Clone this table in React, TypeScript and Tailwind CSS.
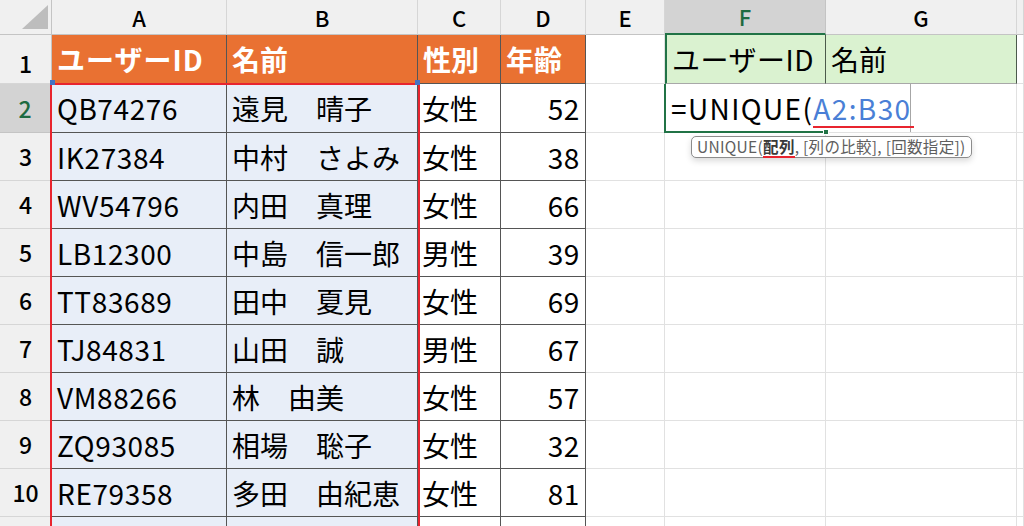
import React from 'react';

const rows = [
  { id: 'QB74276', name: '遠見　晴子', sex: '女性', age: 52 },
  { id: 'IK27384', name: '中村　さよみ', sex: '女性', age: 38 },
  { id: 'WV54796', name: '内田　真理', sex: '女性', age: 66 },
  { id: 'LB12300', name: '中島　信一郎', sex: '男性', age: 39 },
  { id: 'TT83689', name: '田中　夏見', sex: '女性', age: 69 },
  { id: 'TJ84831', name: '山田　誠', sex: '男性', age: 67 },
  { id: 'VM88266', name: '林　由美', sex: '女性', age: 57 },
  { id: 'ZQ93085', name: '相場　聡子', sex: '女性', age: 32 },
  { id: 'RE79358', name: '多田　由紀恵', sex: '女性', age: 81 },
  { id: '', name: '', sex: '', age: null as number | null },
];

const letters = ['A', 'B', 'C', 'D', 'E', 'F', 'G', ''];

const hdr = 'flex items-center justify-center bg-[#f0f0f0] border-r border-b border-r-[#d6d6d6] border-b-[#c4c4c4] text-[22px] font-medium text-black';
const rowHdr = 'flex items-center justify-center bg-[#f0f0f0] border-r border-b border-r-[#c4c4c4] border-b-[#d6d6d6] text-[23px] font-medium text-black';
const dark = 'flex items-center whitespace-nowrap overflow-hidden border-r border-b border-[#555555] text-[28px] leading-none';
const light = 'border-r border-b border-[#e1e1e1] bg-white';

export default function App() {
  return (
    <div className="relative h-[526px] w-[1024px] overflow-hidden bg-white font-['Noto_Sans_CJK_JP',sans-serif] text-black">
      <div className="grid grid-cols-[52px_175px_191px_83px_85px_79px_161px_191px_1fr] grid-rows-[35px_49px_49px_repeat(9,48px)]">
        {/* column headers */}
        <div className="relative bg-[#f0f0f0] border-r border-b border-r-[#c4c4c4] border-b-[#c4c4c4]">
          <svg className="absolute left-[22px] top-[5px]" width="26" height="24" viewBox="0 0 26 24">
            <polygon points="26,0 26,24 0,24" fill="#bdbdbd" />
          </svg>
        </div>
        {letters.map((l) =>
          l === 'F' ? (
            <div key={l} className="flex items-center justify-center bg-[#d3d3d3] border-r border-r-[#c4c4c4] border-b-2 border-b-[#217346] text-[22px] font-medium text-[#1e6b41]">
              F
            </div>
          ) : (
            <div key={l || 'h'} className={hdr}>{l}</div>
          )
        )}

        {/* row 1 */}
        <div className={`${rowHdr} pt-[9px]`}>1</div>
        <div className={`${dark} bg-[#e97132] pl-[5px] font-bold tracking-[1px] text-white`}>ユーザーID</div>
        <div className={`${dark} bg-[#e97132] pl-[5px] font-bold text-white`}>名前</div>
        <div className={`${dark} bg-[#e97132] pl-[5px] font-bold text-white`}>性別</div>
        <div className={`${dark} bg-[#e97132] pl-[5px] font-bold text-white`}>年齢</div>
        <div className={light}></div>
        <div className="flex items-center pl-[5px] text-[28px] leading-none tracking-[0.5px] bg-[#daf2d0] border-r border-r-[#4b5a4b] border-b border-b-[#a8a8a8] border-l-2 border-l-[#217346]">ユーザーID</div>
        <div className="flex items-center pl-[5px] text-[28px] leading-none bg-[#daf2d0] border-r border-r-[#4b5a4b] border-b border-b-[#a8a8a8]">名前</div>
        <div className={light}></div>

        {/* data rows */}
        {rows.map((r, i) => (
          <React.Fragment key={i}>
            {i === 0 ? (
              <div className="flex items-center justify-center bg-[#d3d3d3] border-b border-b-[#c4c4c4] border-r-2 border-r-[#217346] text-[23px] font-medium text-[#1e6b41]">2</div>
            ) : (
              <div className={rowHdr}>{i < 9 ? i + 2 : ''}</div>
            )}
            <div className={`${dark} bg-[#e8eef8] pl-[5px] tracking-[0.6px]`}>{r.id}</div>
            <div className={`${dark} bg-[#e8eef8] pl-[5px]`}>{r.name}</div>
            <div className={`${dark} bg-white pl-[4px]`}>{r.sex}</div>
            <div className={`${dark} bg-white justify-end pr-[5px] tracking-[0.6px]`}>{r.age}</div>
            <div className={light}></div>
            <div className={light}></div>
            <div className={light}></div>
            <div className={light}></div>
          </React.Fragment>
        ))}
      </div>

      {/* reference range highlight */}
      <div className="absolute left-[50px] top-[83px] h-[460px] w-[370px] border-2 border-[#e8242f]"></div>
      <div className="absolute left-[50px] top-[80px] h-[5px] w-[5px] bg-[#4472c4]"></div>
      <div className="absolute left-[415px] top-[80px] h-[5px] w-[5px] bg-[#4472c4]"></div>

      {/* in-cell editor */}
      <div className="absolute left-[664px] top-[84px] flex h-[48px] w-[247px] items-center whitespace-nowrap border-l-2 border-r border-l-[#217346] border-r-[#a6a6a6] bg-white pl-[5px] text-[28px] leading-none tracking-[1.4px]">
        <span>=UNIQUE(</span>
        <span className="relative text-[#4a7fd6]">
          A2:B30
          <span className="absolute -bottom-[6px] left-0 right-[-2px] h-[2px] bg-[#e8242f]"></span>
        </span>
      </div>
      <div className="absolute left-[664px] top-[131px] h-[2px] w-[162px] bg-[#217346]"></div>
      <div className="absolute left-[823px] top-[129px] h-[6px] w-[6px] border border-white bg-[#217346]"></div>

      {/* tooltip */}
      <div className="absolute left-[691px] top-[136px] flex h-[22px] items-center whitespace-nowrap rounded-[5px] border border-[#8c8c8c] bg-white px-[5px] text-[15.5px] leading-none tracking-[0.3px] text-[#5e5e5e] shadow-[0_3px_6px_rgba(0,0,0,0.15)]">
        <span>UNIQUE(</span>
        <span className="relative font-bold text-[#3a3a3a]">
          配列
          <span className="absolute -bottom-[3px] left-0 right-0 h-[2px] bg-[#e8242f]"></span>
        </span>
        <span>, [列の比較], [回数指定])</span>
      </div>
    </div>
  );
}
